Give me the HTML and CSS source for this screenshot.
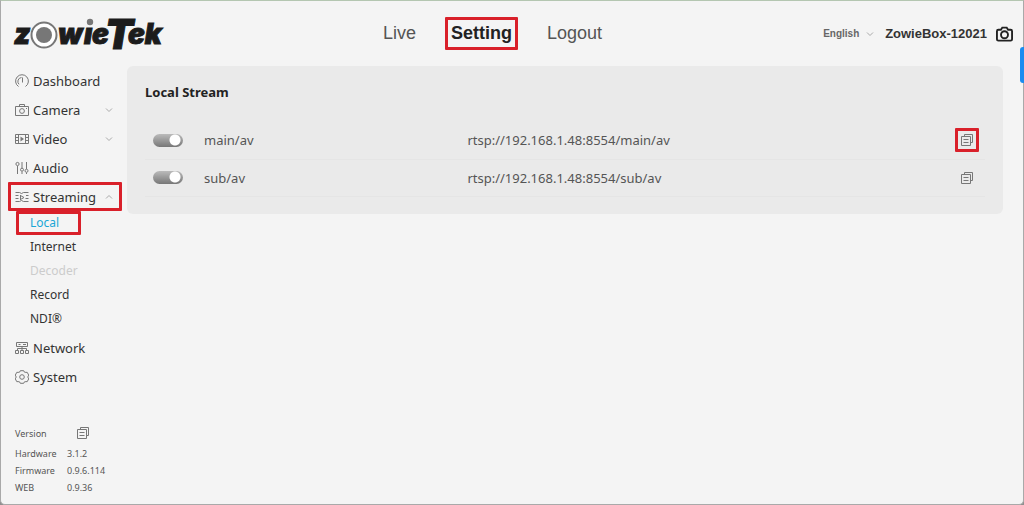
FILE: index.html
```html
<!DOCTYPE html>
<html lang="en">
<head>
  <meta charset="UTF-8" />
  <title>ZowieBox | Local Stream</title>
  <link rel="stylesheet" href="styles.css">
</head>
<body>

  <!-- Shared icons -->
  <svg class="sprite" aria-hidden="true">
    <symbol id="copy" viewBox="0 0 14 14">
      <path d="M4.500 3.500v-2h8v8h-2M1.500 3.500h9v9h-9zM3.500 6.500h5M3.500 9.500h5" />
    </symbol>
    <symbol id="down" viewBox="0 0 8 8">
      <path d="M1 2.500l3 3 3-3" />
    </symbol>
    <symbol id="up" viewBox="0 0 8 8">
      <path d="M1 5.500l3-3 3 3" />
    </symbol>
  </svg>

  <!-- Header -->
  <header>
    <svg class="logo" viewBox="0 -12 152 60" role="img" aria-label="ZowieTek">
      <text class="word" x="1" y="28">z</text>
      <circle class="ring" cx="31" cy="19" r="12.500" />
      <circle class="dot" cx="31" cy="19" r="8" />
      <text class="word" x="45" y="28">w</text>
      <text class="word" x="71" y="28">ı</text>
      <circle class="dot" cx="77" cy="6" r="3.200" />
      <text class="word" x="79" y="28">e</text>
      <text class="word big" x="92" y="33">T</text>
      <text class="word" x="115" y="28">ek</text>
    </svg>
    <nav class="top-nav">
      <a href="#">Live</a>
      <a href="#" class="active marked">Setting</a>
      <a href="#">Logout</a>
    </nav>
    <div class="tools">
      <select class="language" aria-label="Language">
        <option>English</option>
      </select>
      <svg class="icon arrow"><use href="#down" /></svg>
      <span class="device">ZowieBox-12021</span>
      <button class="snapshot" aria-label="Snapshot">
        <svg class="icon" viewBox="0 0 18 16"><path d="M2.500 3.500h2.700l1.500-2.300h4.600l1.500 2.300h2.700q1.500 0 1.500 1.500v8.500q0 1.500-1.500 1.500h-13Q1 15 1 13.500V5q0-1.500 1.500-1.500z" /><circle cx="9" cy="8.800" r="3.700" /></svg>
      </button>
    </div>
  </header>

  <div class="layout">
    <!-- Sidebar -->
    <aside>
      <ul class="menu">
        <li><a href="#">
          <svg class="icon" viewBox="0 0 14 14"><path d="M3.500 12.500A6.400 6.400 0 1 1 10.500 12.500M4 10.300A4 4 0 0 1 6.500 3.500M7.500 3.500v5" /></svg>
          Dashboard</a></li>
        <li><a href="#">
          <svg class="icon" viewBox="0 0 14 14"><path d="M.500 3.500h13v9H.500zM4.500 3.500v-2h5v2M11 5.500h1" /><circle cx="7" cy="8" r="2.400" /></svg>
          Camera
          <svg class="icon arrow"><use href="#down" /></svg></a></li>
        <li><a href="#">
          <svg class="icon" viewBox="0 0 14 14"><path d="M.500 2.500h13v9H.500zM3.500 2.500v9M10.500 2.500v9M.500 5.500h3M.500 8.500h3M10.500 5.500h3M10.500 8.500h3" /><path class="solid" d="M5.500 4.500v5l3.500-2.500z" /></svg>
          Video
          <svg class="icon arrow"><use href="#down" /></svg></a></li>
        <li><a href="#">
          <svg class="icon" viewBox="0 0 14 14"><path d="M2.500 5v8M7 1v6M7 10.500V13M11.500 1v7M11.500 11.500V13" /><circle cx="2.500" cy="3" r="1.600" /><circle cx="7" cy="8.700" r="1.500" /><circle cx="11.500" cy="9.800" r="1.500" /></svg>
          Audio</a></li>
        <li><a href="#" class="marked">
          <svg class="icon" viewBox="0 0 14 14"><path d="M.500 2.500h4l2 1 2-1h5M.500 5.500h3M.500 8.500h3M.500 11.500h4l2-1 2 1h5M11 5.500h2.500M10.500 8.500h3M5.500 5v5M5.500 5.500L9 7.500l-3.500 2" /></svg>
          Streaming
          <svg class="icon arrow"><use href="#up" /></svg></a>
          <ul class="submenu">
            <li><a href="#" class="current marked">Local</a></li>
            <li><a href="#">Internet</a></li>
            <li><a class="disabled">Decoder</a></li>
            <li><a href="#">Record</a></li>
            <li><a href="#">NDI®</a></li>
          </ul>
        </li>
        <li><a href="#">
          <svg class="icon" viewBox="0 0 14 14"><path d="M1.500 1.500h11v4h-11zM3.500 3.500h2M8 3.500h3M7 5.500v4M2.500 9.500v-2h9v2M.500 9.500h3v3h-3zM5.500 9.500h3v3h-3zM10.500 9.500h3v3h-3z" /></svg>
          Network</a></li>
        <li><a href="#">
          <svg class="icon" viewBox="0 0 14 14"><path d="M5.300.700h3.400q.3 2 2.200 1.700l1.300-.1 1.500 2.800q-1.800 1.900 0 3.800l-1.500 2.800-1.300-.1q-1.900-.3-2.200 1.700H5.300q-.3-2-2.200-1.700l-1.300.1L.300 8.900q1.800-1.900 0-3.800l1.500-2.800 1.300.1Q5 2.700 5.300.700z" /><circle cx="7" cy="7" r="2.300" /></svg>
          System</a></li>
      </ul>

      <dl class="versions">
        <dt>Version</dt>
        <dd><button class="copy" aria-label="Copy version"><svg class="icon"><use href="#copy" /></svg></button></dd>
        <dt>Hardware</dt>
        <dd>3.1.2</dd>
        <dt>Firmware</dt>
        <dd>0.9.6.114</dd>
        <dt>WEB</dt>
        <dd>0.9.36</dd>
      </dl>
    </aside>

    <!-- Streams -->
    <main>
      <section class="card">
        <h2>Local Stream</h2>
        <table>
          <tr>
            <td class="switch"><input type="checkbox" id="main" checked></td>
            <td class="name"><label for="main">main/av</label></td>
            <td class="address">rtsp://192.168.1.48:8554/main/av</td>
            <td class="action"><button class="copy marked" aria-label="Copy main address"><svg class="icon"><use href="#copy" /></svg></button></td>
          </tr>
          <tr>
            <td class="switch"><input type="checkbox" id="sub" checked></td>
            <td class="name"><label for="sub">sub/av</label></td>
            <td class="address">rtsp://192.168.1.48:8554/sub/av</td>
            <td class="action"><button class="copy" aria-label="Copy sub address"><svg class="icon"><use href="#copy" /></svg></button></td>
          </tr>
        </table>
      </section>
    </main>
  </div>

  <button class="side-tab" aria-label="Open panel"></button>

</body>
</html>
```
FILE: styles.css
```css
* {
  box-sizing: border-box;
  margin: 0;
  padding: 0;
}

html {
  background: #8f8f8f;
}

body {
  display: flex;
  flex-direction: column;
  min-height: 100vh;
  background: #f4f4f4;
  border: 1px solid #a9a9a9;
  border-top-color: #b4c6b1;
  border-radius: 0 0 5px 5px;
  color: #333;
  font-family: "Noto Sans", sans-serif;
  font-size: 13px;
}

a {
  color: inherit;
  text-decoration: none;
}

ul {
  list-style: none;
}

button {
  background: none;
  border: none;
  cursor: pointer;
}

.sprite {
  position: absolute;
  width: 0;
  height: 0;
}

.icon {
  display: block;
  flex: none;
  width: 14px;
  height: 14px;
  fill: none;
  stroke: #777;
  stroke-width: 1;
}

.icon .solid {
  fill: #777;
  stroke: none;
}

.icon.arrow {
  width: 8px;
  height: 8px;
  stroke: #aaa;
}

/* red frame round a highlighted control */
.marked {
  position: relative;
}

.marked::after {
  content: "";
  position: absolute;
  inset: 0;
  border: 3px solid #d9202a;
  border-radius: 1px;
}

/* Header */
header {
  display: grid;
  grid-template-columns: 9fr auto 10fr;
  align-items: center;
  height: 65px;
  padding: 0 10px 0 12px;
  font-family: "Liberation Sans", Arial, sans-serif;
}

.logo {
  width: 152px;
  height: 60px;
}

.logo .word {
  fill: #1c1c1c;
  stroke: #1c1c1c;
  stroke-width: 1;
  font-family: Inter, sans-serif;
  font-size: 28px;
  font-weight: 900;
  font-style: italic;
}

.logo .big {
  font-size: 41px;
}

.logo .ring {
  fill: #fff;
  stroke: #777;
  stroke-width: 2;
}

.logo .dot {
  fill: #777;
}

.top-nav {
  display: flex;
  align-items: center;
  gap: 29px;
  color: #555;
  font-size: 18px;
}

.top-nav .active {
  padding: 6px;
  color: #222;
  font-weight: bold;
}

.tools {
  display: flex;
  align-items: center;
  justify-content: flex-end;
  font-weight: bold;
}

.language {
  appearance: none;
  width: 43px;
  background: none;
  border: none;
  color: #666;
  font: inherit;
  font-size: 10px;
}

.device {
  margin: 0 9px 0 11px;
}

.snapshot .icon {
  width: 17px;
  height: 16px;
  stroke: #222;
  stroke-width: 2;
}

/* Sidebar */
.layout {
  display: flex;
  flex: 1;
}

aside {
  display: flex;
  flex-direction: column;
  justify-content: space-between;
  width: 126px;
  padding: 0 5px 8px 7px;
}

.menu > li > a {
  display: flex;
  align-items: center;
  gap: 4px;
  height: 29px;
  padding: 0 9px 0 7px;
}

.menu .arrow {
  margin-left: auto;
}

.submenu {
  margin-bottom: 2px;
  padding-left: 8px;
  font-size: 12px;
}

.submenu a {
  display: block;
  width: 65px;
  padding-left: 14px;
  line-height: 24px;
}

.submenu .current {
  color: #1aa7d6;
}

.submenu .disabled {
  color: #ccc;
}

.versions {
  display: grid;
  grid-template-columns: 52px 1fr;
  align-items: center;
  padding-left: 7px;
  color: #555;
  font-size: 9px;
  line-height: 17px;
}

.versions .copy {
  margin-left: 4px;
}

/* Stream card */
main {
  flex: 1;
  padding-right: 20px;
}

.card {
  padding: 17px 18px;
  background: #eaeaea;
  border-radius: 6px;
}

.card h2 {
  margin-bottom: 21px;
  color: #222;
  font-size: 13px;
  line-height: 18px;
}

table {
  width: 100%;
  border-collapse: collapse;
  color: #555;
}

td {
  height: 37px;
  border-bottom: 1px solid #e5e5e5;
}

.switch {
  width: 59px;
  padding-left: 8px;
}

.name {
  width: 31%;
}

.address {
  padding-left: 3px;
}

.action {
  width: 30px;
}

.switch input {
  appearance: none;
  display: block;
  width: 30px;
  height: 13px;
  border-radius: 7px;
  background: radial-gradient(circle at 22px 6px, #fff 5px, transparent 6px), linear-gradient(#bbb, #777);
  cursor: pointer;
}

.copy {
  display: block;
  padding: 5px;
}

.side-tab {
  position: absolute;
  top: 47px;
  right: 0;
  width: 4px;
  height: 36px;
  background: #1a8cf0;
  border-radius: 3px 0 0 3px;
}
```
